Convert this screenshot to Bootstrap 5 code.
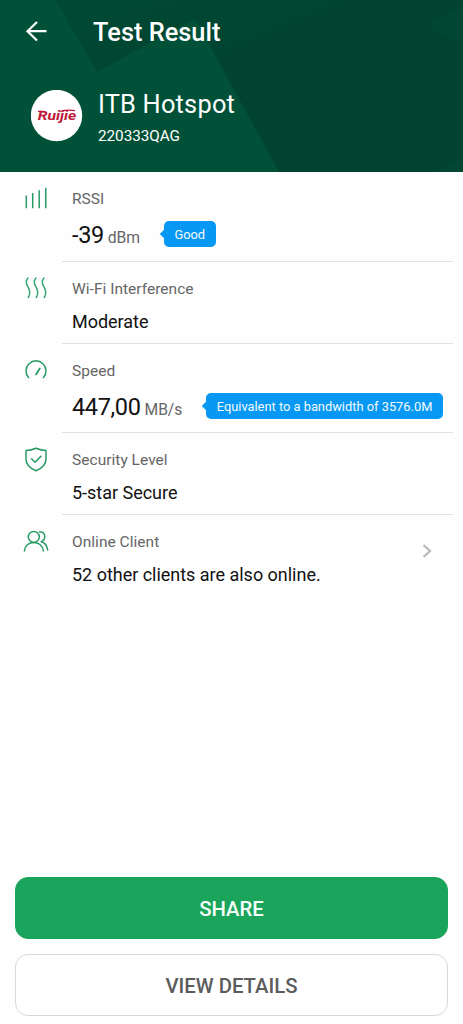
<!DOCTYPE html>
<html lang="en">
<head>
<meta charset="utf-8">
<meta name="viewport" content="width=device-width, initial-scale=1">
<title>Test Result</title>
<link href="https://cdn.jsdelivr.net/npm/bootstrap@5.3.0/dist/css/bootstrap.min.css" rel="stylesheet">
<style>
  body { font-family: Roboto, "Liberation Sans", sans-serif; color: #111; background: #fefefe; }
  .screen { height: 1024px; overflow: hidden; }
  .hero { height: 172px; background: #005138; color: #fff; }
  .hero-art { z-index: 0; }
  .hero-inner { z-index: 1; }
  .title-bar { height: 64px; padding-left: 25px; gap: 45px; }
  .title-text { font-size: 25.4px; font-weight: 500; line-height: 30px; color: #fff; }
  .device { padding: 22px 0 0 31px; gap: 15px; }
  .brand { width: 52px; height: 52px; margin-top: 4px; }
  .device-name { font-size: 25.4px; line-height: 30px; padding-top: 3px; letter-spacing: .2px; }
  .device-id { font-size: 15.3px; line-height: 20px; margin-top: 7px; letter-spacing: -.05px; }
  .metric { height: 82px; padding-right: 10px; }
  .metric.tall { height: 89.5px; }
  .metric-icon { width: 62px; padding: 13px 0 0 22px; }
  .metric-body { border-bottom: 1px solid #e2e2e2; padding: 17px 0 0 10px; }
  .metric:last-child .metric-body { border: 0; }
  .caption-text { font-size: 15.5px; line-height: 20px; color: #666; letter-spacing: .03px; }
  .value { font-size: 18px; line-height: 24px; margin-top: 11px; letter-spacing: -.02px; }
  .figure-row { height: 30px; margin-top: 11px; }
  .number { font-size: 23.5px; line-height: 30px; letter-spacing: -.35px; }
  .unit { font-size: 15.7px; color: #666; margin-left: 4px; letter-spacing: -.1px; }
  .tip { background: #0798f4; color: #f4fbff; border-radius: 5px; height: 26px; line-height: 27px; font-size: 12.85px; padding: 0 10.5px; position: relative; top: -1px; }
  .tip::before { content: ""; position: absolute; left: -3px; top: 10px; width: 6px; height: 6px; background: inherit; transform: rotate(45deg); }
  .actions { padding: 0 15px 8px; gap: 15px; }
  .action { height: 62px; border-radius: 13px; font-size: 20.3px; font-weight: 500; --bs-btn-padding-y: 2px; }
  .share { --bs-btn-bg: #1ba45c; --bs-btn-color: #f7fffa; --bs-btn-border-color: #1ba45c; }
  .details { --bs-btn-bg: #fff; --bs-btn-color: #5c5c5c; --bs-btn-border-color: #d8d8d8; }
  .action { padding-top: 4px; }
</style>
</head>
<body>
<main class="screen d-flex flex-column">
  <header class="hero position-relative flex-shrink-0">
    <svg class="hero-art position-absolute top-0 start-0" width="463" height="172" viewBox="0 0 463 172" aria-hidden="true">
      <defs>
        <linearGradient id="shade" x1="0" y1="0" x2="1" y2="1"><stop offset="0" stop-color="#004a34"/><stop offset=".45" stop-color="#004330"/><stop offset="1" stop-color="#004330"/></linearGradient>
      </defs>
      <path d="M55 0H463V172H279L195 19L97 72Z" fill="url(#shade)"/>
      <path d="M463 7L425 24L463 48ZM463 157L437 172H463Z" fill="#004a35" opacity=".5"/>
    </svg>
    <div class="hero-inner position-relative">
      <div class="title-bar d-flex align-items-center">
        <svg width="23" height="22" viewBox="0 0 23 22" fill="none" stroke="#fff" stroke-width="2.2"><path d="M12 1L2.5 10.2L12 19.5M2.5 10.2H21.5"/></svg>
        <h1 class="title-text mb-0">Test Result</h1>
      </div>
      <div class="device d-flex">
        <svg class="brand" viewBox="0 0 52 52"><circle cx="25.5" cy="25.5" r="25.7" fill="#fff"/><path d="M7 21.3H13M29 21.5Q37 19.3 44 20.6" fill="none" stroke="#bd1739" stroke-width="1.2"/><text x="6.8" y="30" font-size="12" font-weight="700" font-style="italic" fill="#bd1739" textLength="38.5" lengthAdjust="spacingAndGlyphs">Ruijie</text></svg>
        <div>
          <div class="device-name">ITB Hotspot</div>
          <div class="device-id">220333QAG</div>
        </div>
      </div>
    </div>
  </header>

  <section class="flex-grow-1">
    <div class="metric tall d-flex">
      <div class="metric-icon"><svg width="28" height="28" viewBox="0 0 28 28" fill="none" stroke="#299c66" stroke-width="1.5"><path d="M4.3 10.5V23.2M10.7 8V23.2M17.2 5.3V23.2M23.8 2.8V23.2"/></svg></div>
      <div class="metric-body flex-grow-1">
        <div class="caption-text">RSSI</div>
        <div class="figure-row d-flex align-items-center">
          <div><span class="number">-39</span><span class="unit">dBm</span></div>
          <span class="tip ms-4">Good</span>
        </div>
      </div>
    </div>
    <div class="metric d-flex">
      <div class="metric-icon"><svg width="28" height="28" viewBox="0 0 28 28" fill="none" stroke="#37a878" stroke-width="1.5" stroke-linecap="round"><path d="M6 3C3 6.5 4.3 9.5 6 12C8.2 15.5 8.7 18.5 6.3 22.5M14 3C11 6.5 12.3 9.5 14 12C16.2 15.5 16.7 18.5 14.3 22.5M22 3C19 6.5 20.3 9.5 22 12C24.2 15.5 24.7 18.5 22.3 22.5"/></svg></div>
      <div class="metric-body flex-grow-1">
        <div class="caption-text">Wi-Fi Interference</div>
        <div class="value">Moderate</div>
      </div>
    </div>
    <div class="metric tall d-flex">
      <div class="metric-icon"><svg width="28" height="28" viewBox="0 0 28 28" fill="none" stroke="#299c66" stroke-width="1.5" stroke-linecap="round"><path d="M6.6 20.6A10 10 0 1 1 21.4 20.6"/><path d="M17.8 11.5L14 17.5" stroke-width="1.8"/></svg></div>
      <div class="metric-body flex-grow-1">
        <div class="caption-text">Speed</div>
        <div class="figure-row d-flex align-items-center">
          <div><span class="number">447,00</span><span class="unit">MB/s</span></div>
          <span class="tip ms-4">Equivalent to a bandwidth of 3576.0M</span>
        </div>
      </div>
    </div>
    <div class="metric d-flex">
      <div class="metric-icon"><svg width="28" height="28" viewBox="0 0 28 28" fill="none" stroke="#299c66" stroke-width="1.5" stroke-linecap="round" stroke-linejoin="round"><path d="M14 2.3Q19 4.4 24 4.6V13Q24 20.8 14 24.7Q4 20.8 4 13V4.6Q9 4.4 14 2.3ZM9.5 12.8L13 16.2L18.8 10.4"/></svg></div>
      <div class="metric-body flex-grow-1">
        <div class="caption-text">Security Level</div>
        <div class="value">5-star Secure</div>
      </div>
    </div>
    <div class="metric d-flex">
      <div class="metric-icon"><svg width="28" height="28" viewBox="0 0 28 28" fill="none" stroke="#299c66" stroke-width="1.5" stroke-linecap="round"><circle cx="11.8" cy="8.9" r="5.5"/><path d="M2.4 23C3.5 11.5 20 11.5 21.4 23M17.6 4C24 3.5 24.5 12 18.8 13.7C23 14.5 25.2 18 25.7 22"/></svg></div>
      <div class="metric-body flex-grow-1 d-flex justify-content-between">
        <div>
          <div class="caption-text">Online Client</div>
          <div class="value">52 other clients are also online.</div>
        </div>
        <svg class="mt-1 me-3" width="20" height="24" viewBox="0 0 20 24" fill="none" stroke="#b9b9b9" stroke-width="2.2"><path d="M6.5 9L13 15L6.5 21"/></svg>
      </div>
    </div>
  </section>

  <footer class="actions d-grid">
    <button class="btn action share" type="button">SHARE</button>
    <button class="btn action details" type="button">VIEW DETAILS</button>
  </footer>
</main>
<script src="https://cdn.jsdelivr.net/npm/bootstrap@5.3.0/dist/js/bootstrap.bundle.min.js"></script>
</body>
</html>
